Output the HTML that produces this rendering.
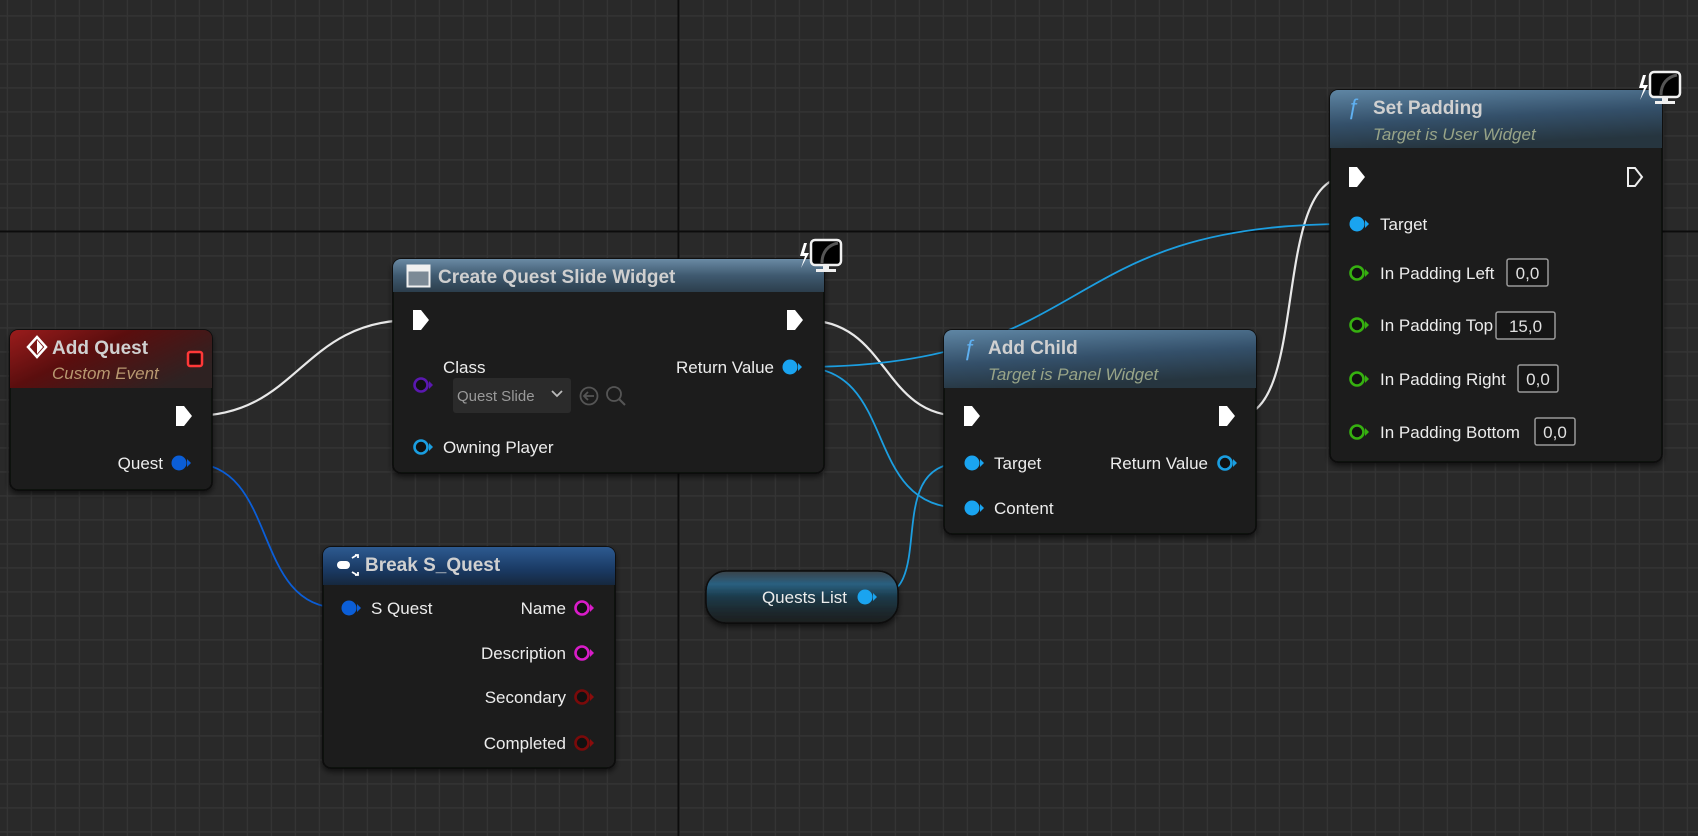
<!DOCTYPE html>
<html><head><meta charset="utf-8"><style>
html,body{margin:0;padding:0;background:#292929;overflow:hidden}
svg{display:block}
text{font-family:"Liberation Sans",sans-serif}
</style></head><body>
<svg width="1698" height="836" viewBox="0 0 1698 836" xmlns="http://www.w3.org/2000/svg">
<defs>
<pattern id="grid" x="6.7" y="15.3" width="24" height="24" patternUnits="userSpaceOnUse">
<path d="M0.5 0V24M0 0.5H24" stroke="#353535" stroke-width="1.5" fill="none"/>
</pattern>
<linearGradient id="gRed" x1="0" y1="0" x2="1" y2="0.6">
<stop offset="0" stop-color="#9a1c1c"/><stop offset="0.45" stop-color="#5a0e0e"/><stop offset="1" stop-color="#2e2222"/></linearGradient>
<linearGradient id="gBlue" x1="0" y1="0" x2="0" y2="1">
<stop offset="0" stop-color="#6a8aa4"/><stop offset="0.5" stop-color="#3f5a70"/><stop offset="1" stop-color="#2c3e4c"/></linearGradient>
<linearGradient id="gFunc" x1="0" y1="0" x2="0.3" y2="1">
<stop offset="0" stop-color="#5f86a4"/><stop offset="0.55" stop-color="#34506a"/><stop offset="1" stop-color="#26353f"/></linearGradient>
<linearGradient id="gBreak" x1="0" y1="0" x2="0" y2="1">
<stop offset="0" stop-color="#2d5a90"/><stop offset="0.6" stop-color="#1a3a64"/><stop offset="1" stop-color="#16283e"/></linearGradient>
<linearGradient id="gVar" x1="0" y1="0" x2="0" y2="1">
<stop offset="0" stop-color="#3a4248"/><stop offset="0.25" stop-color="#2a6080"/><stop offset="0.5" stop-color="#1b3a4a"/><stop offset="0.75" stop-color="#1c2a30"/><stop offset="1" stop-color="#1c1e1e"/></linearGradient>
<clipPath id="c1"><rect x="10" y="330" width="202" height="160" rx="8"/></clipPath>
<clipPath id="c2"><rect x="393" y="259" width="431" height="214" rx="8"/></clipPath>
<clipPath id="c3"><rect x="323" y="547" width="292" height="221" rx="8"/></clipPath>
<clipPath id="c4"><rect x="944" y="330" width="312" height="204" rx="8"/></clipPath>
<clipPath id="c5"><rect x="1330" y="90" width="332" height="372" rx="8"/></clipPath>
<filter id="sh" x="-10%" y="-10%" width="120%" height="130%"><feDropShadow dx="0" dy="3" stdDeviation="3" flood-color="#000" flood-opacity="0.6"/></filter>
</defs>
<rect width="1698" height="836" fill="#292929"/>
<rect width="1698" height="836" fill="url(#grid)"/>
<rect x="677.5" y="0" width="2" height="836" fill="#0c0c0c"/>
<rect x="0" y="230.5" width="1698" height="2" fill="#0c0c0c"/>

<!-- wires -->
<g fill="none" stroke-width="2.2">
<path d="M192 416 C300 416 300 320 413 320" stroke="#e8e8e8"/>
<path d="M804 320 C890 320 880 416 962 416" stroke="#e8e8e8"/>
<path d="M1237 416 C1310 416 1270 177 1347 177" stroke="#e8e8e8"/>
<path d="M800 367 C1100 367 1050 224 1347 224" stroke="#1c9ee0" stroke-width="1.8"/>
<path d="M800 367 C900 367 860 508 962 508" stroke="#1c9ee0" stroke-width="1.8"/>
<path d="M874 597 C940 597 880 463 962 463" stroke="#1c9ee0" stroke-width="1.8"/>
<path d="M190 463 C280 463 250 608 340 608" stroke="#0b5ed7" stroke-width="1.8"/>
</g>

<!-- Add Quest -->
<g filter="url(#sh)"><rect x="10" y="330" width="202" height="160" rx="8" fill="#1b1c1b" stroke="#080808" stroke-width="1.5"/></g>
<g clip-path="url(#c1)"><rect x="10" y="330" width="202" height="58" fill="url(#gRed)"/></g>
<path d="M37 337 L46 347 L37 357 L28 347Z" fill="none" stroke="#fff" stroke-width="2.5"/>
<path d="M37 340 L43 347 L37 354Z" fill="#fff"/>
<text x="52" y="354" font-size="19" font-weight="bold" fill="#d0d0d0">Add Quest</text>
<text x="52" y="379" font-size="17" font-style="italic" fill="#b89870">Custom Event</text>
<rect x="188" y="352" width="14" height="14" rx="2" fill="#200808" stroke="#ff3838" stroke-width="2.5"/>

<!-- Create Quest Slide Widget -->
<g filter="url(#sh)"><rect x="393" y="259" width="431" height="214" rx="8" fill="#1b1c1b" stroke="#080808" stroke-width="1.5"/></g>
<g clip-path="url(#c2)"><rect x="393" y="259" width="431" height="33" fill="url(#gBlue)"/></g>
<rect x="407.5" y="265.5" width="22" height="21" fill="#7c8a96" stroke="#f0f0f0" stroke-width="2"/>
<rect x="408.5" y="266.5" width="20" height="5" fill="#f0f0f0"/>
<text x="438" y="283" font-size="19" font-weight="bold" fill="#cfcfcf">Create Quest Slide Widget</text>
<!-- monitor -->
<g>
<path d="M804 243 L800 256 L805 256 L801 268 L809 253 L804 253 L807 243Z" fill="#fff"/>
<rect x="811" y="240" width="30" height="25" rx="4" fill="#000" stroke="#f0f0f0" stroke-width="2.5"/>
<path d="M822 263 C822 252 828 245 838 243" stroke="#555" stroke-width="3" fill="none"/>
<rect x="823" y="265" width="6" height="5" fill="#f0f0f0"/><rect x="816" y="269" width="20" height="3" fill="#f0f0f0"/>
</g>

<!-- Add Child -->
<g filter="url(#sh)"><rect x="944" y="330" width="312" height="204" rx="8" fill="#1b1c1b" stroke="#080808" stroke-width="1.5"/></g>
<g clip-path="url(#c4)"><rect x="944" y="330" width="312" height="58" fill="url(#gFunc)"/></g>
<text x="963" y="355" font-size="22" font-style="italic" fill="#5fb0f0" font-family="Liberation Serif,serif">ƒ</text>
<text x="988" y="354" font-size="19" font-weight="bold" fill="#d0d0d0">Add Child</text>
<text x="988" y="380" font-size="17" font-style="italic" fill="#98a488">Target is Panel Widget</text>

<!-- Set Padding -->
<g filter="url(#sh)"><rect x="1330" y="90" width="332" height="372" rx="8" fill="#1b1c1b" stroke="#080808" stroke-width="1.5"/></g>
<g clip-path="url(#c5)"><rect x="1330" y="90" width="332" height="58" fill="url(#gFunc)"/></g>
<text x="1347" y="114" font-size="22" font-style="italic" fill="#5fb0f0" font-family="Liberation Serif,serif">ƒ</text>
<text x="1373" y="114" font-size="19" font-weight="bold" fill="#d0d0d0">Set Padding</text>
<text x="1373" y="140" font-size="17" font-style="italic" fill="#98a488">Target is User Widget</text>
<g>
<path d="M1643 75 L1639 88 L1644 88 L1640 100 L1648 85 L1643 85 L1646 75Z" fill="#fff"/>
<rect x="1650" y="72" width="30" height="25" rx="4" fill="#000" stroke="#f0f0f0" stroke-width="2.5"/>
<path d="M1661 95 C1661 84 1667 77 1677 75" stroke="#555" stroke-width="3" fill="none"/>
<rect x="1662" y="97" width="6" height="5" fill="#f0f0f0"/><rect x="1655" y="101" width="20" height="3" fill="#f0f0f0"/>
</g>

<!-- Break S_Quest -->
<g filter="url(#sh)"><rect x="323" y="547" width="292" height="221" rx="8" fill="#1b1c1b" stroke="#080808" stroke-width="1.5"/></g>
<g clip-path="url(#c3)"><rect x="323" y="547" width="292" height="38" fill="url(#gBreak)"/></g>
<rect x="337" y="561" width="13" height="8" rx="4" fill="#fff"/>
<path d="M352 558 l5 -3 M355 555 h3 v3 M352 572 l5 3 M355 575 h3 v-3" stroke="#fff" stroke-width="1.8" fill="none"/>
<text x="365" y="571" font-size="19" font-weight="bold" fill="#d0d0d0">Break S_Quest</text>

<!-- Quests List -->
<g filter="url(#sh)"><rect x="706" y="571" width="192" height="52" rx="20" fill="url(#gVar)" stroke="#0a0a0a" stroke-width="1.5"/></g>

<!-- exec pins -->
<g fill="#fff">
<path d="M176 406 h8 l8 10 l-8 10 h-8z"/>
<path d="M413 310 h8 l8 10 l-8 10 h-8z"/>
<path d="M787 310 h8 l8 10 l-8 10 h-8z"/>
<path d="M964 406 h8 l8 10 l-8 10 h-8z"/>
<path d="M1219 406 h8 l8 10 l-8 10 h-8z"/>
<path d="M1349 167 h8 l8 10 l-8 10 h-8z"/>
</g>
<path d="M1628 168 h7 l7 9 l-7 9 h-7z" fill="none" stroke="#eee" stroke-width="2"/>

<!-- data pins: filled -->
<g>
<circle cx="179" cy="463" r="7.5" fill="#0b5ed7"/><path d="M187 459 l4 4 l-4 4z" fill="#0b5ed7"/>
<circle cx="349" cy="608" r="7.5" fill="#0b5ed7"/><path d="M357 604 l4 4 l-4 4z" fill="#0b5ed7"/>
<circle cx="790" cy="367" r="7.5" fill="#1aa4f0"/><path d="M798 363 l4 4 l-4 4z" fill="#1aa4f0"/>
<circle cx="865" cy="597" r="7.5" fill="#1aa4f0"/><path d="M873 593 l4 4 l-4 4z" fill="#1aa4f0"/>
<circle cx="972" cy="463" r="7.5" fill="#1aa4f0"/><path d="M980 459 l4 4 l-4 4z" fill="#1aa4f0"/>
<circle cx="972" cy="508" r="7.5" fill="#1aa4f0"/><path d="M980 504 l4 4 l-4 4z" fill="#1aa4f0"/>
<circle cx="1357" cy="224" r="7.5" fill="#1aa4f0"/><path d="M1365 220 l4 4 l-4 4z" fill="#1aa4f0"/>
</g>
<!-- hollow pins -->
<g stroke-width="2.6" fill="#111">
<circle cx="421" cy="385" r="6.5" stroke="#5a18b0"/><path d="M429 381 l4 4 l-4 4z" fill="#5a18b0" stroke="none"/>
<circle cx="421" cy="447" r="6.5" stroke="#1a9ee0"/><path d="M429 443 l4 4 l-4 4z" fill="#1a9ee0" stroke="none"/>
<circle cx="1225" cy="463" r="6.5" stroke="#1a9ee0"/><path d="M1233 459 l4 4 l-4 4z" fill="#1a9ee0" stroke="none"/>
<circle cx="582" cy="608" r="6.5" stroke="#d81cc8"/><path d="M590 604 l4 4 l-4 4z" fill="#d81cc8" stroke="none"/>
<circle cx="582" cy="653" r="6.5" stroke="#d81cc8"/><path d="M590 649 l4 4 l-4 4z" fill="#d81cc8" stroke="none"/>
<circle cx="582" cy="697" r="6.5" stroke="#7a0a0a"/><path d="M590 693 l4 4 l-4 4z" fill="#8a0c0c" stroke="none"/>
<circle cx="582" cy="743" r="6.5" stroke="#7a0a0a"/><path d="M590 739 l4 4 l-4 4z" fill="#8a0c0c" stroke="none"/>
<circle cx="1357" cy="273" r="6.5" stroke="#36b010"/><path d="M1365 269 l4 4 l-4 4z" fill="#36b010" stroke="none"/>
<circle cx="1357" cy="325" r="6.5" stroke="#36b010"/><path d="M1365 321 l4 4 l-4 4z" fill="#36b010" stroke="none"/>
<circle cx="1357" cy="379" r="6.5" stroke="#36b010"/><path d="M1365 375 l4 4 l-4 4z" fill="#36b010" stroke="none"/>
<circle cx="1357" cy="432" r="6.5" stroke="#36b010"/><path d="M1365 428 l4 4 l-4 4z" fill="#36b010" stroke="none"/>
</g>

<!-- labels -->
<g font-size="17" fill="#ececec">
<text x="163" y="469" text-anchor="end">Quest</text>
<text x="443" y="373">Class</text>
<text x="774" y="373" text-anchor="end">Return Value</text>
<text x="443" y="453">Owning Player</text>
<text x="371" y="614">S Quest</text>
<text x="566" y="614" text-anchor="end">Name</text>
<text x="566" y="659" text-anchor="end">Description</text>
<text x="566" y="703" text-anchor="end">Secondary</text>
<text x="566" y="749" text-anchor="end">Completed</text>
<text x="847" y="603" text-anchor="end">Quests List</text>
<text x="994" y="469">Target</text>
<text x="994" y="514">Content</text>
<text x="1208" y="469" text-anchor="end">Return Value</text>
<text x="1380" y="230">Target</text>
<text x="1380" y="279">In Padding Left</text>
<text x="1380" y="331">In Padding Top</text>
<text x="1380" y="385">In Padding Right</text>
<text x="1380" y="438">In Padding Bottom</text>
</g>
<!-- value boxes -->
<g fill="#151515" stroke="#9a9a9a" stroke-width="1.5">
<rect x="1507" y="259" width="41" height="27" rx="2"/>
<rect x="1496" y="312" width="59" height="27" rx="2"/>
<rect x="1518" y="365" width="40" height="27" rx="2"/>
<rect x="1535" y="418" width="40" height="27" rx="2"/>
</g>
<g font-size="17" fill="#e0e0e0" text-anchor="middle">
<text x="1527.5" y="279">0,0</text>
<text x="1525.5" y="332">15,0</text>
<text x="1538" y="385">0,0</text>
<text x="1555" y="438">0,0</text>
</g>
<!-- dropdown -->
<rect x="453" y="378" width="118" height="35" rx="3" fill="#2b2b2b"/>
<text x="457" y="401" font-size="15" fill="#9a9a9a">Quest Slide</text>
<path d="M552 391 l5 5 l5 -5" stroke="#bbb" stroke-width="1.8" fill="none"/>
<circle cx="589" cy="396" r="8.5" fill="none" stroke="#555" stroke-width="1.8"/>
<path d="M594 396 h-9 M588 392 l-4 4 l4 4" stroke="#555" stroke-width="1.8" fill="none"/>
<circle cx="614" cy="394" r="7" fill="none" stroke="#555" stroke-width="1.8"/>
<path d="M619 399 l6 6" stroke="#555" stroke-width="2"/>
</svg>
</body></html>
